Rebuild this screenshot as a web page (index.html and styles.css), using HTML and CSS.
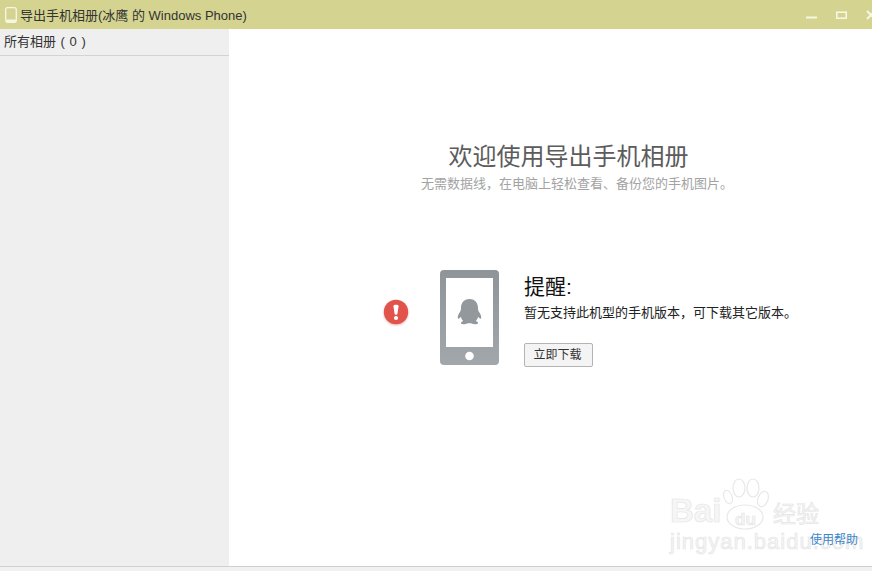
FILE: index.html
```html
<!DOCTYPE html>
<html lang="zh-CN">
<head>
    <meta charset="UTF-8">
    <meta name="viewport" content="width=device-width, initial-scale=1.0">
    <title>导出手机相册</title>
    <link rel="stylesheet" href="styles.css">
</head>
<body>

<div class="window">
    <div class="title-bar">
        <svg class="title-icon" width="12" height="16" viewBox="0 0 12 16">
            <rect x="0.7" y="0.7" width="10.6" height="14.6" rx="2" fill="none" stroke="#f6f6e4" stroke-width="1.3"/>
            <rect x="1" y="12.6" width="10" height="2.6" rx="1" fill="#f6f6e4"/>
        </svg>
        <span class="title-text">导出手机相册(冰鹰 的 Windows Phone)</span>
        <div class="window-buttons">
            <svg width="11" height="10" viewBox="0 0 11 10"><rect x="0" y="6.5" width="11" height="2" fill="#f6f6e4"/></svg>
            <svg width="11" height="8" viewBox="0 0 11 8"><rect x="0.8" y="1.2" width="9.4" height="6" fill="none" stroke="#f6f6e4" stroke-width="1.6"/></svg>
            <svg width="10" height="10" viewBox="0 0 10 10"><path d="M1 1 L9 9 M9 1 L1 9" stroke="#f6f6e4" stroke-width="2"/></svg>
        </div>
    </div>

    <div class="content">
        <div class="sidebar">
            <div class="album-row">所有相册 ( 0 )</div>
        </div>

        <div class="main">
            <div class="hero">
                <h1>欢迎使用导出手机相册</h1>
                <p>无需数据线，在电脑上轻松查看、备份您的手机图片。</p>
            </div>

            <div class="notice">
                <svg class="alert-icon" width="26" height="26" viewBox="0 0 26 26">
                    <circle cx="13" cy="13" r="12.2" fill="#e2534b"/>
                    <path d="M10.4 7 C10.4 5.4 15.6 5.4 15.6 7 L14.4 15 C14.2 16 11.8 16 11.6 15 Z" fill="#fff"/>
                    <circle cx="13" cy="19" r="2.1" fill="#fff"/>
                </svg>
                <svg class="phone-icon" width="59" height="95" viewBox="0 0 59 95">
                    <defs>
                        <linearGradient id="phoneFill" x1="0" y1="0" x2="0" y2="1">
                            <stop offset="0" stop-color="#8f9498"/>
                            <stop offset="1" stop-color="#a2a7ac"/>
                        </linearGradient>
                    </defs>
                    <rect width="59" height="95" rx="4" fill="url(#phoneFill)"/>
                    <rect x="6" y="8" width="47" height="69" fill="#fff"/>
                    <circle cx="29.5" cy="86" r="4.3" fill="#fff"/>
                    <path d="M29.5 29 C23.5 29 21 33.5 21 38 C21 40 20.6 41 19.6 42.6 C18 45 17.3 47.6 18 48.6 C18.7 49.2 20 48 20.9 46.8 C21.3 48.6 22.2 50 23.3 51 C21.6 51.6 20.8 52.4 21 53.2 C21.4 54.4 25.4 54.6 27.2 53.6 C28.4 53.2 30.6 53.2 31.8 53.6 C33.6 54.6 37.6 54.4 38 53.2 C38.2 52.4 37.4 51.6 35.7 51 C36.8 50 37.7 48.6 38.1 46.8 C39 48 40.3 49.2 41 48.6 C41.7 47.6 41 45 39.4 42.6 C38.4 41 38 40 38 38 C38 33.5 35.5 29 29.5 29 Z" fill="#93989c"/>
                </svg>
                <div class="notice-text">
                    <h2>提醒:</h2>
                    <p>暂无支持此机型的手机版本，可下载其它版本。</p>
                    <button class="download-btn">立即下载</button>
                </div>
            </div>

            <div class="watermark">
                <svg class="paw" width="46" height="52" viewBox="0 0 46 52">
                    <g fill="#fff" stroke="#e8e8e8" stroke-width="1.2">
                        <ellipse cx="5" cy="19" rx="4" ry="7" transform="rotate(-20 5 19)"/>
                        <ellipse cx="16" cy="10" rx="6" ry="9"/>
                        <ellipse cx="30" cy="10" rx="6" ry="9"/>
                        <ellipse cx="40" cy="21" rx="5" ry="8" transform="rotate(20 40 21)"/>
                        <ellipse cx="22" cy="39" rx="18" ry="12"/>
                    </g>
                </svg>
                <span class="wm-bai">Bai</span>
                <span class="wm-du">du</span>
                <span class="wm-cn">经验</span>
                <span class="wm-url">jingyan.baidu.com</span>
            </div>

            <a class="help-link">使用帮助</a>
        </div>
    </div>

    <div class="status-bar"></div>
</div>

</body>
</html>
```

FILE: styles.css
```css
* {
    box-sizing: border-box;
}
html, body {
    height: 100%;
}
body {
    margin: 0;
    font-family: "Liberation Sans", "Noto Sans CJK SC", sans-serif;
    background: #fff;
    overflow: hidden;
}
.window {
    display: flex;
    flex-direction: column;
    height: 571px;
}
.title-bar {
    display: flex;
    align-items: center;
    height: 29px;
    padding-left: 5px;
    background: #d4d490;
    flex-shrink: 0;
}
.title-icon {
    margin-right: 3px;
}
.title-text {
    font-size: 13px;
    color: #333;
}
.window-buttons {
    display: flex;
    align-items: center;
    gap: 19px;
    margin-left: auto;
    margin-right: -4px;
}
.content {
    display: flex;
    flex: 1;
    min-height: 0;
}
.sidebar {
    width: 229px;
    background: #efefef;
    flex-shrink: 0;
}
.album-row {
    height: 27px;
    padding: 2px 0 0 4px;
    font-size: 13px;
    word-spacing: 1px;
    color: #333;
    border-bottom: 1px solid #d3d3d3;
}
.main {
    position: relative;
    flex: 1;
    background: #fff;
}
.hero {
    width: 309px;
    margin: 111px 0 0 192px;
    text-align: center;
}
.hero h1 {
    margin: 0;
    padding-right: 14px;
    font-size: 24px;
    font-weight: normal;
    line-height: 34px;
    color: #5c5c5c;
}
.hero p {
    margin: 1px 0 0;
    font-size: 13px;
    line-height: 18px;
    color: #a3a3a3;
    white-space: nowrap;
}
.notice {
    display: flex;
    align-items: flex-start;
    margin: 77px 0 0 154px;
}
.alert-icon {
    margin: 29px 31px 0 0;
    filter: drop-shadow(0 1px 1px rgba(180, 60, 50, 0.35));
}
.phone-icon {
    margin-right: 25px;
}
.notice-text h2 {
    margin: 3px 0 0;
    font-size: 21px;
    font-weight: normal;
    line-height: 28px;
    color: #111;
}
.notice-text p {
    margin: 3px 0 0;
    font-size: 13px;
    line-height: 18px;
    color: #222;
    white-space: nowrap;
}
.download-btn {
    display: block;
    width: 69px;
    height: 24px;
    margin-top: 21px;
    padding: 0 2px 3px 0;
    font-family: inherit;
    font-size: 12px;
    color: #333;
    background: #f4f4f4;
    border: 1px solid #b4b4b4;
    border-radius: 2px;
}
.watermark {
    position: absolute;
    left: 440px;
    top: 447px;
    width: 200px;
    height: 90px;
    color: #f6f6f6;
}
.watermark span {
    position: absolute;
    -webkit-text-stroke: 0.7px #e6e6e6;
}
.paw {
    position: absolute;
    left: 54px;
    top: 2px;
}
.wm-bai {
    left: 1px;
    top: 16px;
    font-size: 33px;
    font-weight: bold;
}
.wm-du {
    left: 66px;
    top: 34px;
    font-size: 17px;
    font-weight: bold;
}
.wm-cn {
    left: 104px;
    top: 19px;
    font-size: 23px;
    white-space: nowrap;
}
.wm-url {
    left: 1px;
    top: 53px;
    font-size: 22px;
    letter-spacing: 1px;
    white-space: nowrap;
}
.help-link {
    position: absolute;
    left: 581px;
    top: 501px;
    font-size: 12px;
    color: #3b86c8;
}
.status-bar {
    height: 5px;
    background: #f1f1f1;
    border-top: 1px solid #d0d0d0;
    flex-shrink: 0;
}
```
